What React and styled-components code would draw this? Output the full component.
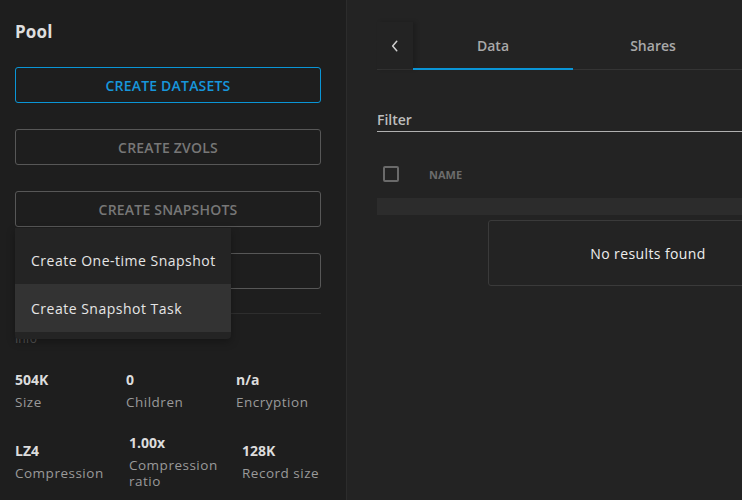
import React from "react";
import styled, { createGlobalStyle } from "styled-components";

const GlobalStyle = createGlobalStyle`
  html, body {
    margin: 0;
    padding: 0;
    background: #232323;
    font-family: "Open Sans", "Noto Sans", sans-serif;
  }
  * { box-sizing: border-box; }
`;

const stats = [
  {
    columns: "111px 110px 1fr",
    items: [
      { value: "504K", label: "Size" },
      { value: "0", label: "Children" },
      { value: "n/a", label: "Encryption" },
    ],
  },
  {
    columns: "114px 113px 1fr",
    items: [
      { value: "LZ4", label: "Compression" },
      { value: "1.00x", label: "Compression ratio" },
      { value: "128K", label: "Record size" },
    ],
  },
];

const App = () => {
  return (
    <Page>
      <GlobalStyle />
      <Sidebar>
        <Title>Pool</Title>
        <Actions>
          <ActionButton primary>CREATE DATASETS</ActionButton>
          <ActionButton>CREATE ZVOLS</ActionButton>
          <MenuAnchor>
            <ActionButton>CREATE SNAPSHOTS</ActionButton>
            <Menu>
              <MenuItem>Create One-time Snapshot</MenuItem>
              <MenuItem active>Create Snapshot Task</MenuItem>
            </Menu>
          </MenuAnchor>
          <ActionButton>MORE</ActionButton>
        </Actions>
        <Separator />
        <SectionLabel>Info</SectionLabel>
        {stats.map((row, i) => (
          <StatsRow key={i} columns={row.columns}>
            {row.items.map((item) => (
              <Stat key={item.label}>
                <StatValue>{item.value}</StatValue>
                <StatLabel>{item.label}</StatLabel>
              </Stat>
            ))}
          </StatsRow>
        ))}
      </Sidebar>
      <Main>
        <TabBar>
          <BackButton>
            <svg width="14" height="14" viewBox="0 0 24 24" fill="none" stroke="#cfcfcf" strokeWidth="2.6" strokeLinecap="round" strokeLinejoin="round">
              <polyline points="15 4 8 12 15 20" />
            </svg>
          </BackButton>
          <Tab active>Data</Tab>
          <Tab>Shares</Tab>
        </TabBar>
        <FilterField>Filter</FilterField>
        <TableHead>
          <Checkbox />
          <HeadCell>NAME</HeadCell>
        </TableHead>
        <TableBar />
        <EmptyBox>No results found</EmptyBox>
      </Main>
    </Page>
  );
};

const Page = styled.div`
  display: flex;
  width: 742px;
  height: 500px;
  overflow: hidden;
`;

const Sidebar = styled.div`
  width: 347px;
  flex-shrink: 0;
  height: 100%;
  background: #1e1e1e;
  border-right: 1px solid #2c2c2c;
  padding: 21px 25px 0 15px;
`;

const Title = styled.h2`
  margin: 0 0 24px;
  font-size: 17px;
  font-weight: 700;
  color: #dedede;
  line-height: 22px;
  letter-spacing: 0.2px;
`;

const Actions = styled.div`
  display: flex;
  flex-direction: column;
  gap: 26px;
`;

const MenuAnchor = styled.div`
  position: relative;
`;

const ActionButton = styled.div`
  height: 36px;
  display: flex;
  align-items: center;
  justify-content: center;
  border: 1px solid ${(p) => (p.primary ? "#0a95d6" : "#575757")};
  border-radius: 3px;
  color: ${(p) => (p.primary ? "#1796db" : "#777777")};
  font-size: 14px;
  font-weight: 600;
  letter-spacing: 0.2px;
`;

const Menu = styled.div`
  position: absolute;
  top: 37px;
  left: 0;
  width: 216px;
  padding: 8px 0 7px;
  background: #242424;
  border-radius: 0 0 4px 4px;
  box-shadow: 0 3px 8px rgba(0, 0, 0, 0.3);
  z-index: 2;
`;

const MenuItem = styled.div`
  height: 48px;
  display: flex;
  align-items: center;
  padding-left: 16px;
  font-size: 14px;
  color: #e6e6e6;
  letter-spacing: 0.5px;
  background: ${(p) => (p.active ? "#333333" : "transparent")};
`;

const Separator = styled.div`
  height: 1px;
  background: #2e2e2e;
  margin-top: 24px;
`;

const SectionLabel = styled.div`
  margin-top: 16px;
  font-size: 12px;
  color: #555;
  height: 17px;
`;

const StatsRow = styled.div`
  display: grid;
  grid-template-columns: ${(p) => p.columns};
  align-items: center;
  margin-top: 24px;
  &:first-of-type { margin-top: 0; }
`;

const Stat = styled.div`
  display: flex;
  flex-direction: column;
  gap: 5px;
`;

const StatValue = styled.div`
  font-size: 14px;
  font-weight: 700;
  color: #dcdcdc;
  line-height: 18px;
`;

const StatLabel = styled.div`
  font-size: 13.5px;
  color: #9a9a9a;
  line-height: 16px;
  letter-spacing: 0.5px;
  max-width: 98px;
`;

const Main = styled.div`
  flex: 1;
  min-width: 0;
  padding: 22px 0 0 30px;
`;

const TabBar = styled.div`
  display: flex;
  height: 48px;
  border-bottom: 1px solid #343434;
`;

const BackButton = styled.div`
  width: 36px;
  display: flex;
  align-items: center;
  justify-content: center;
  box-shadow: 3px 0 4px rgba(0, 0, 0, 0.18);
`;

const Tab = styled.div`
  width: 160px;
  display: flex;
  align-items: center;
  justify-content: center;
  font-size: 14px;
  font-weight: 600;
  color: #a9a9a9;
  border-bottom: 2px solid ${(p) => (p.active ? "#0a95d6" : "transparent")};
  margin-bottom: -1px;
`;

const FilterField = styled.div`
  margin-top: 40px;
  height: 22px;
  font-size: 14px;
  font-weight: 600;
  color: #bdbdbd;
  border-bottom: 1px solid #b0b0b0;
`;

const TableHead = styled.div`
  display: flex;
  align-items: center;
  height: 66px;
  padding-top: 18px;
`;

const Checkbox = styled.div`
  width: 16px;
  height: 16px;
  margin-left: 6px;
  border: 2px solid #6a6a6a;
  border-radius: 2px;
`;

const HeadCell = styled.div`
  margin-left: 30px;
  font-size: 11px;
  font-weight: 700;
  color: #6c6c6c;
`;

const TableBar = styled.div`
  height: 17px;
  background: #2c2c2c;
`;

const EmptyBox = styled.div`
  margin: 5px 0 0 111px;
  width: 320px;
  height: 66px;
  display: flex;
  align-items: center;
  justify-content: center;
  border: 1px solid #3a3a3a;
  border-radius: 3px;
  font-size: 14px;
  letter-spacing: 0.4px;
  color: #eeeeee;
`;

export default App;
